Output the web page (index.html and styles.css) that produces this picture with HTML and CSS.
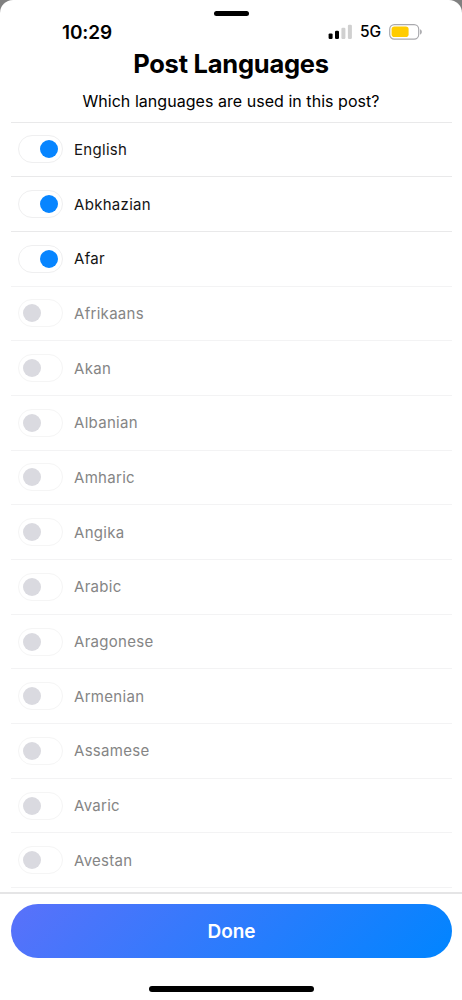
FILE: index.html
```html
<!DOCTYPE html>
<html lang="en">
<head>
<meta charset="utf-8">
<title>Post Languages</title>
<link rel="stylesheet" href="styles.css">
</head>
<body>
<main class="sheet">
  <div class="grabber"></div>
  <div class="status">
    <span class="time">10:29</span>
    <div class="indicators">
      <svg class="signal" width="25" height="16" viewBox="0 0 25 16">
        <rect x="0.6" y="9.4" width="4" height="5.6" rx="1.2" fill="#000"/>
        <rect x="7" y="6.8" width="4" height="8.2" rx="1.2" fill="#000"/>
        <rect x="13.4" y="3.7" width="4" height="11.3" rx="1.2" fill="#d0d0d0"/>
        <rect x="19.9" y="0.7" width="4" height="14.3" rx="1.2" fill="#d0d0d0"/>
      </svg>
      <span class="network">5G</span>
      <svg class="battery" width="34" height="16" viewBox="0 0 34 16">
        <rect x="0.7" y="0.6" width="29" height="14.5" rx="4.6" fill="#fff" stroke="#a9a9ad" stroke-width="1.2"/>
        <rect x="2.6" y="2.6" width="17" height="10.5" rx="2.8" fill="#fc0"/>
        <path d="M31.2 5.3c2 .8 2 4.5 0 5.3z" fill="#9c9ca0"/>
      </svg>
    </div>
  </div>
  <h1 class="title">Post Languages</h1>
  <p class="subtitle">Which languages are used in this post?</p>
  <ul class="list">
    <li class="row on"><span class="toggle"></span><span class="label">English</span></li>
    <li class="row on"><span class="toggle"></span><span class="label">Abkhazian</span></li>
    <li class="row on"><span class="toggle"></span><span class="label">Afar</span></li>
    <li class="row"><span class="toggle"></span><span class="label">Afrikaans</span></li>
    <li class="row"><span class="toggle"></span><span class="label">Akan</span></li>
    <li class="row"><span class="toggle"></span><span class="label">Albanian</span></li>
    <li class="row"><span class="toggle"></span><span class="label">Amharic</span></li>
    <li class="row"><span class="toggle"></span><span class="label">Angika</span></li>
    <li class="row"><span class="toggle"></span><span class="label">Arabic</span></li>
    <li class="row"><span class="toggle"></span><span class="label">Aragonese</span></li>
    <li class="row"><span class="toggle"></span><span class="label">Armenian</span></li>
    <li class="row"><span class="toggle"></span><span class="label">Assamese</span></li>
    <li class="row"><span class="toggle"></span><span class="label">Avaric</span></li>
    <li class="row"><span class="toggle"></span><span class="label">Avestan</span></li>
    <li class="row"></li>
  </ul>
  <footer class="footer">
    <button class="done">Done</button>
    <div class="home"></div>
  </footer>
</main>
</body>
</html>
```

FILE: styles.css
```css
* { box-sizing: border-box; }
body {
  margin: 0;
  background: #808080;
  font-family: Inter, "Liberation Sans", sans-serif;
  color: #000;
}
.sheet {
  display: flex;
  flex-direction: column;
  height: 1000px;
  padding-top: 11px;
  background: #fff;
  border-radius: 13px 13px 0 0;
  overflow: hidden;
}
.grabber {
  flex: none;
  width: 35px;
  height: 5px;
  margin: 0 auto;
  border-radius: 3px;
  background: #000;
}
.status {
  flex: none;
  display: flex;
  justify-content: space-between;
  align-items: center;
  height: 32px;
  padding: 0 39px 0 62px;
}
.time {
  padding-top: 2px;
  font-size: 19px;
  font-weight: 600;
  line-height: 30px;
  letter-spacing: -0.1px;
}
.indicators { display: flex; align-items: center; }
.network {
  width: 22px;
  margin: 0 7px;
  font-size: 15.5px;
  font-weight: 500;
  line-height: 32px;
}
.title {
  flex: none;
  margin: 0;
  font-size: 25.5px;
  font-weight: 700;
  line-height: 32px;
  letter-spacing: -0.24px;
  text-align: center;
}
.subtitle {
  flex: none;
  height: 41.5px;
  margin: 0;
  padding-top: 11px;
  font-size: 16px;
  line-height: 20px;
  letter-spacing: 0.04px;
  text-align: center;
}
.list {
  flex: 1;
  min-height: 0;
  overflow: hidden;
  margin: 0 10px 0 11px;
  padding: 0;
  list-style: none;
}
.row {
  display: flex;
  align-items: center;
  gap: 11px;
  height: 54.7px;
  padding-left: 7px;
  border-top: 1px solid #f3f3f4;
  font-size: 15px;
  letter-spacing: 0.3px;
  color: #858585;
}
.row.on { color: #141414; border-top-color: #e9e9ea; }
.toggle {
  display: flex;
  width: 45px;
  height: 28px;
  padding: 4px;
  border: 1px solid #f5f5f5;
  border-radius: 14px;
}
.toggle::before {
  content: "";
  width: 18px;
  height: 18px;
  border-radius: 50%;
  background: #dadae0;
}
.on .toggle { justify-content: flex-end; border-color: #efeff0; }
.on .toggle::before { background: #0785ff; }
.footer {
  flex: none;
  height: 108px;
  padding: 10px 10px 0 11px;
  border-top: 2px solid #e5e5e6;
}
.done {
  display: block;
  width: 100%;
  height: 54px;
  padding: 1px 0 0;
  border: 0;
  border-radius: 27px;
  background: linear-gradient(135deg, #5a71fa 0%, #0085ff 100%);
  color: #fff;
  font: 600 19px/53px Inter, "Liberation Sans", sans-serif;
}
.home {
  width: 165px;
  height: 6px;
  margin: 28px auto 0;
  border-radius: 3px;
  background: #000;
}
```
